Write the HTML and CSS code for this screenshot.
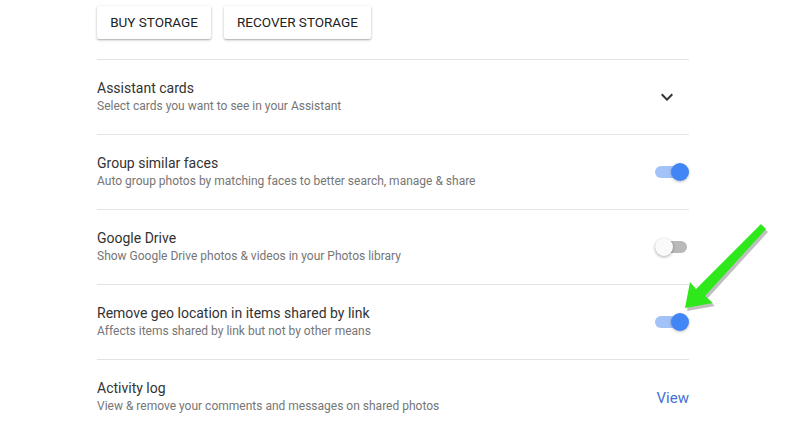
FILE: index.html
```html
<!DOCTYPE html>
<html lang="en">
<head>
  <meta charset="UTF-8" />
  <meta name="viewport" content="width=device-width, initial-scale=1.0"/>
  <title>Photos Settings</title>
  <link rel="stylesheet" href="styles.css">
</head>
<body>
  <div class="settings">
    <div class="storage-actions">
      <button class="raised-btn">Buy storage</button>
      <button class="raised-btn">Recover storage</button>
    </div>

    <div class="setting-row">
      <div class="setting-text">
        <div class="setting-title">Assistant cards</div>
        <div class="setting-sub">Select cards you want to see in your Assistant</div>
      </div>
      <svg class="chevron" viewBox="0 0 24 24" width="24" height="24">
        <path d="M16.59 8.59L12 13.17 7.41 8.59 6 10l6 6 6-6z" fill="#333"/>
      </svg>
    </div>

    <div class="setting-row">
      <div class="setting-text">
        <div class="setting-title">Group similar faces</div>
        <div class="setting-sub">Auto group photos by matching faces to better search, manage &amp; share</div>
      </div>
      <div class="toggle on"><span class="track"></span><span class="thumb"></span></div>
    </div>

    <div class="setting-row">
      <div class="setting-text">
        <div class="setting-title">Google Drive</div>
        <div class="setting-sub">Show Google Drive photos &amp; videos in your Photos library</div>
      </div>
      <div class="toggle"><span class="track"></span><span class="thumb"></span></div>
    </div>

    <div class="setting-row">
      <div class="setting-text">
        <div class="setting-title">Remove geo location in items shared by link</div>
        <div class="setting-sub">Affects items shared by link but not by other means</div>
      </div>
      <div class="toggle on"><span class="track"></span><span class="thumb"></span></div>
    </div>

    <div class="setting-row">
      <div class="setting-text">
        <div class="setting-title">Activity log</div>
        <div class="setting-sub">View &amp; remove your comments and messages on shared photos</div>
      </div>
      <a class="view-link" href="#">View</a>
    </div>
  </div>

  <!-- annotation arrow drawn over the screenshot -->
  <svg class="annotation" viewBox="0 0 800 427" width="800" height="427">
    <polygon class="arrow-shadow" points="687,311 715,306 707,299 768,232 763,227 698,292 692,285"/>
    <polygon class="arrow" points="685,308 713,303 705,296 766,229 761,224 696,289 690,282"/>
  </svg>
</body>
</html>
```

FILE: styles.css
```css
body {
  margin: 0;
  background-color: #fff;
  font-family: Roboto, "Liberation Sans", sans-serif;
  color: #333;
  overflow: hidden;
}
.settings {
  width: 592px;
  margin-left: 97px;
}
.storage-actions {
  display: flex;
  gap: 13px;
  padding-top: 6px;
  margin-bottom: 20px;
}
.raised-btn {
  height: 33px;
  padding: 0 0 1px;
  border: none;
  border-radius: 2px;
  background-color: #fff;
  color: #222;
  font-family: Roboto, "Liberation Sans", sans-serif;
  font-size: 13.5px;
  font-weight: 400;
  white-space: nowrap;
  text-transform: uppercase;
  box-shadow: 0 1px 3px rgba(0, 0, 0, 0.25), 0 1px 1px rgba(0, 0, 0, 0.12);
}
.raised-btn:first-child {
  width: 114px;
}
.raised-btn:last-child {
  width: 147px;
}
.setting-row {
  display: flex;
  align-items: center;
  justify-content: space-between;
  height: 74px;
  border-top: 1px solid #e3e3e3;
}
.setting-title {
  font-size: 14px;
  line-height: 18px;
  color: #333;
}
.setting-sub {
  font-size: 12px;
  line-height: 18px;
  color: #767676;
}
.chevron {
  margin-right: 10px;
}
.toggle {
  position: relative;
  width: 34px;
  height: 18px;
}
.toggle .track {
  position: absolute;
  left: 0;
  top: 3px;
  width: 32px;
  height: 12px;
  border-radius: 6px;
  background-color: #b9b9b9;
}
.toggle .thumb {
  position: absolute;
  left: 0;
  top: 0;
  width: 18px;
  height: 18px;
  border-radius: 50%;
  background-color: #fafafa;
  box-shadow: 0 1px 3px rgba(0, 0, 0, 0.35);
}
.toggle.on .track {
  background-color: #a3c2f8;
}
.toggle.on .thumb {
  left: 16px;
  background-color: #4285f4;
  box-shadow: 0 1px 3px rgba(0, 0, 0, 0.25);
}
.view-link {
  font-size: 15px;
  font-weight: 400;
  color: #4470d6;
  text-decoration: none;
  margin-top: 2px;
}
.annotation {
  position: absolute;
  left: 0;
  top: 0;
  pointer-events: none;
}
.arrow-shadow {
  fill: rgba(0, 0, 0, 0.25);
}
.arrow {
  fill: #2fe81c;
}
```
